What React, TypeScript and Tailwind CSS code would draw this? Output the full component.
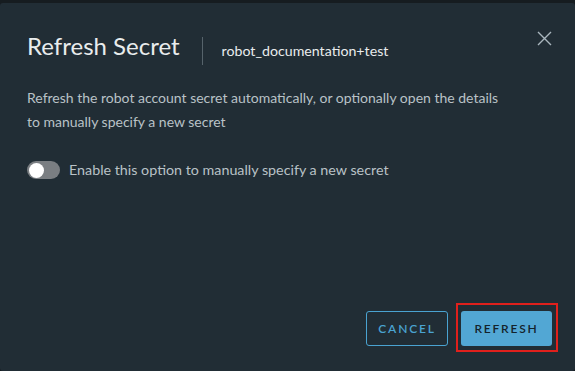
export default function App() {
  return (
    <div className="w-[575px] h-[371px] bg-[#161c20] pt-[3px] overflow-hidden" style={{ fontFamily: "Lato, 'Noto Sans', sans-serif" }}>
      <div className="h-[368px] bg-[#212d35] rounded-[3px] flex flex-col px-[27px]">
        <div className="flex items-start mt-[31px]">
          <h3 className="text-[24px] text-[#e9eced] leading-none">Refresh Secret</h3>
          <div className="w-px h-[28px] bg-[#56636b] mt-[3px] ml-[22px] mr-[19px]" />
          <span className="text-[14.2px] leading-none text-[#e9eced] mt-[10px]">robot_documentation+test</span>
          <button className="ml-auto -mr-[4px] -mt-[3px] text-[#a9b6be]">
            <svg width="15" height="15" viewBox="0 0 15 15" fill="none" stroke="currentColor" strokeWidth="1.4">
              <path d="M1 1L14 14M14 1L1 14" />
            </svg>
          </button>
        </div>
        <p className="mt-[21px] text-[14px] leading-[24px] text-[#b9c2c7] pr-[40px]">
          Refresh the robot account secret automatically, or optionally open the details to manually specify a new secret
        </p>
        <div className="flex items-center mt-[27px] gap-[9px] h-[18px]">
          <div className="w-[33px] h-[18px] rounded-full bg-[#7a7e82] flex items-center px-[2px]">
            <div className="w-[15px] h-[15px] rounded-full bg-white" />
          </div>
          <span className="text-[14.3px] text-[#b9c2c7]">Enable this option to manually specify a new secret</span>
        </div>
        <div className="flex-1" />
        <div className="flex justify-end items-center gap-[8px] mb-[19px] -mr-[10px]">
          <button className="w-[82px] h-[35px] mt-[2px] rounded-[3px] border border-[#4aa3d1] text-[#4aa3d1] text-[12px] font-semibold tracking-[0.15em]">
            CANCEL
          </button>
          <div className="border-2 border-[#e0201c] pt-[6px] pb-[4px] pl-[3px] pr-[4px]">
            <button className="block w-[91px] h-[35px] rounded-[3px] bg-[#52a7d4] text-[#14232b] text-[12px] font-semibold tracking-[0.15em]">
              REFRESH
            </button>
          </div>
        </div>
      </div>
    </div>
  );
}
